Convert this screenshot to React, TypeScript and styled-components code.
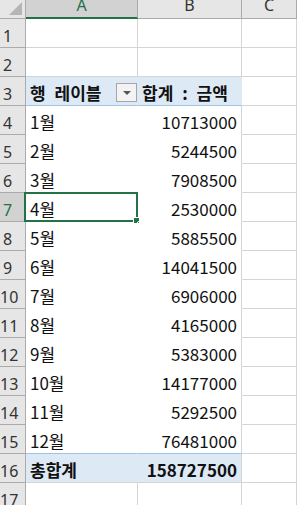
import React from "react";
import styled, { createGlobalStyle, css } from "styled-components";

const Global = createGlobalStyle`
  html, body { margin: 0; padding: 0; background: #fff; }
  body { font-family: "Noto Sans CJK KR", "Noto Sans", sans-serif; }
`;

const Sheet = styled.div`
  display: grid;
  grid-template-columns: 26px 112px 104px 1fr;
  grid-auto-rows: 29px;
  grid-template-rows: 19px;
  width: 297px;
  height: 505px;
  overflow: hidden;
`;

const Corner = styled.div`
  background: #e6e6e6;
  border-right: 1px solid #ababab;
  border-bottom: 1px solid #ababab;
  box-sizing: border-box;
  position: relative;
  overflow: hidden;
  &::after {
    content: "";
    position: absolute;
    right: 3px;
    bottom: 3px;
    width: 0;
    height: 0;
    border-left: 13px solid transparent;
    border-bottom: 13px solid #b5b5b5;
  }
`;

const ColHead = styled.div<{ $sel?: boolean }>`
  background: ${(p) => (p.$sel ? "#d2d2d2" : "#e6e6e6")};
  border-right: 1px solid #ababab;
  border-bottom: ${(p) => (p.$sel ? "2px solid #217346" : "1px solid #ababab")};
  box-sizing: border-box;
  display: flex;
  align-items: flex-start;
  justify-content: center;
  overflow: hidden;
  font-family: "Noto Sans", sans-serif;
  font-size: 16px;
  color: ${(p) => (p.$sel ? "#217346" : "#333")};
  line-height: 1;
  & > span {
    margin-top: -3px;
  }
`;

const RowHead = styled.div<{ $sel?: boolean }>`
  background: ${(p) => (p.$sel ? "#d2d2d2" : "#e6e6e6")};
  border-right: ${(p) => (p.$sel ? "2px solid #217346" : "1px solid #ababab")};
  border-bottom: 1px solid #ababab;
  box-sizing: border-box;
  display: flex;
  align-items: flex-end;
  justify-content: safe center;
  padding: 0 ${(p) => (p.$sel ? 9 : 10)}px 3px 0;
  overflow: hidden;
  font-family: "Noto Sans", sans-serif;
  font-size: 16px;
  color: ${(p) => (p.$sel ? "#217346" : "#333")};
  line-height: 1;
  white-space: nowrap;
`;

type Kind = "plain" | "head" | "data" | "total";

const Cell = styled.div<{ $kind?: Kind; $right?: boolean; $lastRow?: boolean }>`
  box-sizing: border-box;
  border-right: 1px solid #d4d4d4;
  border-bottom: 1px solid #d4d4d4;
  display: flex;
  align-items: flex-end;
  justify-content: ${(p) => (p.$right ? "flex-end" : "flex-start")};
  padding: 0 4px 4px 4px;
  font-size: 17px;
  line-height: 1;
  color: #111;
  white-space: nowrap;
  word-spacing: 5px;
  position: relative;
  ${(p) =>
    p.$kind === "head" &&
    css`
      background: #dde9f5;
      border-right-color: #dde9f5;
      border-bottom: 1px solid #9dc3e6;
      font-weight: 700;
    `}
  ${(p) =>
    p.$kind === "data" &&
    css`
      border-right-color: ${p.$right ? "#d4d4d4" : "#fff"};
      border-bottom-color: ${p.$lastRow ? "#9dc3e6" : "#fff"};
    `}
  ${(p) =>
    p.$kind === "total" &&
    css`
      background: #dde9f5;
      border-right-color: ${p.$right ? "#d4d4d4" : "#dde9f5"};
      font-weight: 700;
    `}
`;

const FilterBtn = styled.span`
  box-sizing: border-box;
  width: 21px;
  height: 19px;
  margin-left: auto;
  margin-right: -4px;
  margin-bottom: -1px;
  border: 1px solid #a6a6a6;
  background: #f3f3f3;
  display: flex;
  align-items: center;
  justify-content: center;
  &::after {
    content: "";
    border-left: 4px solid transparent;
    border-right: 4px solid transparent;
    border-top: 4px solid #555;
  }
`;

const Selection = styled.span`
  position: absolute;
  left: -2px;
  top: -1px;
  right: -1px;
  bottom: -1px;
  border: 2px solid #217346;
  pointer-events: none;
  &::after {
    content: "";
    position: absolute;
    right: -4px;
    bottom: -4px;
    width: 5px;
    height: 5px;
    background: #217346;
    border: 1px solid #fff;
  }
`;

const months = [
  ["1월", "10713000"],
  ["2월", "5244500"],
  ["3월", "7908500"],
  ["4월", "2530000"],
  ["5월", "5885500"],
  ["6월", "14041500"],
  ["7월", "6906000"],
  ["8월", "4165000"],
  ["9월", "5383000"],
  ["10월", "14177000"],
  ["11월", "5292500"],
  ["12월", "76481000"],
];

export default function App() {
  return (
    <>
      <Global />
      <Sheet>
        <Corner />
        <ColHead $sel><span>A</span></ColHead>
        <ColHead><span>B</span></ColHead>
        <ColHead><span>C</span></ColHead>

        <RowHead>1</RowHead>
        <Cell />
        <Cell />
        <Cell />

        <RowHead>2</RowHead>
        <Cell />
        <Cell />
        <Cell />

        <RowHead>3</RowHead>
        <Cell $kind="head">
          행 레이블
          <FilterBtn />
        </Cell>
        <Cell $kind="head">합계 : 금액</Cell>
        <Cell />

        {months.map(([m, v], i) => {
          const row = i + 4;
          const sel = row === 7;
          return (
            <React.Fragment key={m}>
              <RowHead $sel={sel}>{row}</RowHead>
              <Cell $kind="data" $lastRow={i === months.length - 1}>
                {m}
                {sel && <Selection />}
              </Cell>
              <Cell $kind="data" $right $lastRow={i === months.length - 1}>
                {v}
              </Cell>
              <Cell />
            </React.Fragment>
          );
        })}

        <RowHead>16</RowHead>
        <Cell $kind="total">총합계</Cell>
        <Cell $kind="total" $right>
          158727500
        </Cell>
        <Cell />

        <RowHead>17</RowHead>
        <Cell />
        <Cell />
        <Cell />
      </Sheet>
    </>
  );
}
